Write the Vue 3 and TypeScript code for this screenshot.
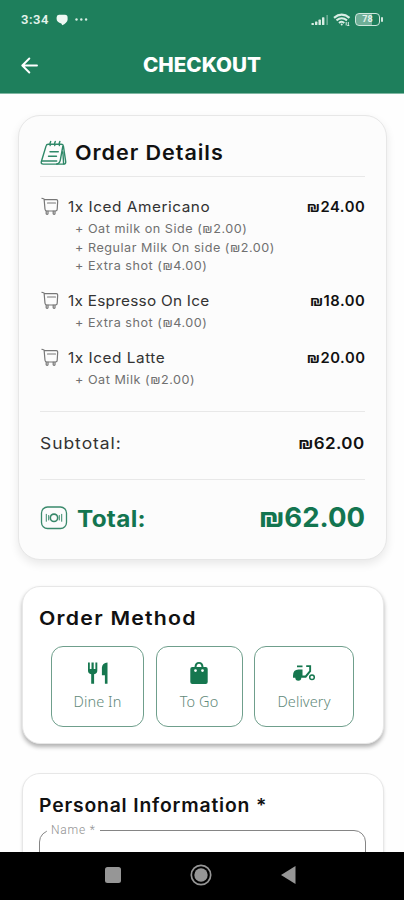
<script setup lang="ts">
interface OrderItem {
  name: string
  price: string
  extras: string[]
}

const items: OrderItem[] = [
  {
    name: '1x Iced Americano',
    price: '₪24.00',
    extras: ['+ Oat milk on Side (₪2.00)', '+ Regular Milk On side (₪2.00)', '+ Extra shot (₪4.00)'],
  },
  { name: '1x Espresso On Ice', price: '₪18.00', extras: ['+ Extra shot (₪4.00)'] },
  { name: '1x Iced Latte', price: '₪20.00', extras: ['+ Oat Milk (₪2.00)'] },
]
</script>

<template>
  <div class="screen">
    <header class="header">
      <div class="status">
        <span class="clock">3:34</span>
        <svg class="chat" width="12" height="12" viewBox="0 0 12 12">
          <path d="M3 .8h6a2.700 2.700 0 0 1 2.600 2.700v2.300C11.600 8 9 10 6.300 11.300L5.300 9.400C2.500 9 .6 7.200.6 5V3.400A2.600 2.600 0 0 1 3 .8z" fill="#eef8f3" />
        </svg>
        <svg class="dots" width="13" height="4" viewBox="0 0 13 4" fill="#d8ede4">
          <circle cx="1.500" cy="1.500" r="1.200" /><circle cx="6.300" cy="1.500" r="1.200" /><circle cx="11.100" cy="1.500" r="1.200" />
        </svg>
        <span class="grow"></span>
        <svg class="signal" width="18" height="12" viewBox="0 0 18 12" fill="#d8ede4">
          <rect x="0.500" y="9" width="2.400" height="2" rx=".6" /><rect x="4" y="7.600" width="2.400" height="3.400" rx=".6" />
          <rect x="7.500" y="5.600" width="2.400" height="5.400" rx=".6" /><rect x="11" y="3.200" width="2.400" height="7.800" rx=".6" />
          <rect x="15.600" y="1" width="1" height="10" opacity=".65" />
        </svg>
        <svg class="wifi" width="18" height="14" viewBox="0 0 18 14" fill="none" stroke="#d8ede4">
          <path d="M1 4.800Q8.700-1.600 16.500 4.800" stroke-width="2.200" />
          <path d="M3.500 7.400Q8.700 3.200 14 7.400" stroke-width="2" />
          <path d="M6 10Q8.700 7.600 11.300 10" stroke-width="2" />
          <circle cx="8.700" cy="11.600" r="1" fill="#d8ede4" stroke="none" />
          <path d="M13.200 9v3.500M15.300 9v4M14.300 12.500h2" stroke-width="1" />
        </svg>
        <span class="battery">78</span>
      </div>
      <div class="bar">
        <svg class="back" width="18" height="17" viewBox="0 0 18 17" fill="none" stroke="#fff" stroke-width="1.900" stroke-linecap="round" stroke-linejoin="round">
          <path d="M16 8.500H1.500M8.300 1.500L1.300 8.500l7 7" />
        </svg>
        <h1>CHECKOUT</h1>
      </div>
    </header>

    <main class="content">
      <section class="card details">
        <div class="title-row">
          <svg width="28" height="26" viewBox="0 0 28 26" fill="none" stroke="#2f8868" stroke-width="1.400" stroke-linecap="round" stroke-linejoin="round">
            <path d="M8.300 4.300h12.900q1.900 0 2.200 1.700l2.300 15.600q.3 2.500-2.200 2.500H3.200q-2.400 0-1.900-2.300L6.100 5.900q.4-1.600 2.200-1.600z" />
            <path d="M22.800 6.500l-2.500 13.700q-.7 3.600-3.600 3.800M22.900 12l.7 11.800M1.900 21h14.800" />
            <path d="M10.700 1.500q-1.100 1.500-.5 4M15.300 1.500q-1.100 1.500-.5 4M19.900 1.500q-1.100 1.500-.5 4M10 11.700h8.300M8.500 16.300h8" />
          </svg>
          <h2>Order Details</h2>
        </div>

        <ul class="items">
          <li v-for="item in items" :key="item.name">
            <div class="line">
              <svg width="18" height="19" viewBox="0 0 18 19" fill="none" stroke="#777" stroke-width="1.200" stroke-linecap="round" stroke-linejoin="round">
                <path d="M.9 1.300l2.200.7.900 10.300q.2 1.700 1.800 1.700h8.700q1.700 0 1.700-1.700l.5-8.300q0-1.400-1.400-1.400H3.200M6.500 6h8" />
                <path d="M5.200 14v2.800q.9 1 1.800 0V14M12.200 14v2.800q.9 1 1.800 0V14" />
              </svg>
              <span class="name">{{ item.name }}</span>
              <span class="price">{{ item.price }}</span>
            </div>
            <p v-for="extra in item.extras" :key="extra" class="extra">{{ extra }}</p>
          </li>
        </ul>

        <div class="subtotal">
          <span class="sub-label">Subtotal:</span>
          <span class="sub-value">₪62.00</span>
        </div>

        <div class="total">
          <svg width="28" height="24" viewBox="0 0 28 24" fill="none" stroke="#39896b" stroke-width="1.300" stroke-linecap="round">
            <rect x="1.500" y="1" width="25" height="21.500" rx="6" />
            <circle cx="14" cy="11.800" r="3.700" stroke-width="1.600" />
            <path d="M6.300 8.300v7M8.700 9.500v4.500M21.700 8.300v7M19.300 9.500v4.500" stroke-width="1" />
          </svg>
          <span class="total-label">Total:</span>
          <span class="total-value">₪62.00</span>
        </div>
      </section>

      <section class="card method">
        <h3>Order Method</h3>
        <div class="options">
          <button class="option dine" type="button">
            <svg width="24" height="24" viewBox="0 0 24 24" fill="#16774f">
              <path d="M2 1.500h1.800v6.500h1.700V1.500h2.200v6.500h1.700V1.500h1.900v8q0 3.200-3.200 3.700v9.500H5.200v-9.500Q2 12.700 2 9.500z" />
              <path d="M21.500 1.500v21.200h-2.600v-8.500h-3V6.500Q16.300 2 21.500 1.500z" />
            </svg>
            <span>Dine In</span>
          </button>
          <button class="option togo" type="button">
            <svg width="24" height="24" viewBox="0 0 24 24" fill="#16774f">
              <path fill-rule="evenodd" d="M7.500 6q.3-5 4.500-5t4.500 5h2.200q2 0 2 2v13q0 2-2 2H5.300q-2 0-2-2V8q0-2 2-2zm2 0h5q-.4-3.200-2.500-3.200T9.500 6zM8.500 8.200a1.400 1.400 0 1 0 0 2.800 1.400 1.400 0 0 0 0-2.800zm7 0a1.400 1.400 0 1 0 0 2.800 1.400 1.400 0 0 0 0-2.800z" />
            </svg>
            <span>To Go</span>
          </button>
          <button class="option delivery" type="button">
            <svg width="24" height="24" viewBox="0 0 24 24" fill="#16774f">
              <path d="M5 4.500h5.500v1.800H5zM1 14.800Q1 8.500 6.500 8.500h4v6h2.700l4-4.800V6h-3V4.200h4.900v6.300l-5 6.200H9.300a3 3 0 0 1-6 0H1z" />
              <circle cx="20" cy="16.300" r="2.300" fill="none" stroke="#16774f" stroke-width="1.500" />
            </svg>
            <span>Delivery</span>
          </button>
        </div>
      </section>

      <section class="card personal">
        <h3>Personal Information *</h3>
        <fieldset class="field">
          <legend>Name *</legend>
        </fieldset>
      </section>
    </main>

    <nav class="navbar">
      <svg width="16" height="16" viewBox="0 0 16 16"><rect width="16" height="16" rx="2.500" fill="#969696" /></svg>
      <svg width="22" height="22" viewBox="0 0 22 22">
        <circle cx="11" cy="11" r="9.700" fill="none" stroke="#969696" stroke-width="1.700" /><circle cx="11" cy="11" r="6.700" fill="#969696" />
      </svg>
      <svg width="15" height="18" viewBox="0 0 15 18"><path d="M14.500 0v18L0 9z" fill="#969696" /></svg>
    </nav>
  </div>
</template>

<style>
body {
  background: #fff;
}
</style>

<style scoped>
.screen {
  display: flex;
  flex-direction: column;
  width: 404px;
  height: 900px;
  overflow: hidden;
  background: #fefefe;
  color: #111;
  font-family: Inter, 'Liberation Sans', sans-serif;
}
.screen * {
  box-sizing: border-box;
}
h1,
h2,
h3,
p,
ul {
  margin: 0;
  padding: 0;
}
svg {
  display: block;
  flex: none;
}
.header {
  flex: none;
  height: 94px;
  background: #1e7f5c;
  border-bottom: 1px solid #7fb7a2;
}
.status {
  display: flex;
  align-items: center;
  height: 39px;
  padding: 0 22px 0 21px;
}
.clock {
  width: 28px;
  color: #e4f3ec;
  font: 600 13px/16px Roboto, sans-serif;
  letter-spacing: 0.5px;
  white-space: nowrap;
}
.chat {
  margin-left: 7px;
}
.dots {
  margin-left: 7px;
}
.grow {
  flex: 1;
}
.wifi {
  margin-left: 4px;
}
.battery {
  position: relative;
  width: 25px;
  height: 13px;
  margin: 0 2px 0 4px;
  border: 1.5px solid #cfe7dd;
  border-radius: 4px;
  color: #e4f3ec;
  background: linear-gradient(90deg, #6fae97 70%, #1e7f5c 70%);
  font: 700 9px/10px Roboto, sans-serif;
  text-align: center;
}
.battery::after {
  content: '';
  position: absolute;
  top: 3px;
  right: -4px;
  width: 2px;
  height: 5px;
  border-radius: 1px;
  background: #cfe7dd;
}
.bar {
  display: grid;
  grid-template-columns: 60px 1fr 60px;
  align-items: center;
  height: 52px;
}
.back {
  margin-left: 21px;
}
h1 {
  color: #fff;
  font-size: 19.5px;
  font-weight: 800;
  line-height: 24px;
  text-align: center;
  transform: scaleX(1.06);
}
.content {
  flex: 1;
  min-height: 0;
  overflow: hidden;
  padding: 21px 21px 0 18px;
}
.card {
  background: #fff;
  border: 1px solid #e7e7e7;
}
.details {
  width: 369px;
  height: 445px;
  padding: 16px 21px 0;
  border-radius: 22px;
  background: #fcfcfc;
  box-shadow: 0 4px 10px rgba(0, 0, 0, 0.09);
}
.title-row {
  display: flex;
  align-items: center;
  height: 45px;
  padding-bottom: 3px;
  border-bottom: 1px solid #e8e8e8;
}
h2 {
  margin-left: 7px;
  font-size: 20.5px;
  font-weight: 600;
  letter-spacing: 0.9px;
  white-space: nowrap;
  transform: scaleX(1.052);
  transform-origin: left;
}
.items {
  height: 234px;
  padding-top: 17px;
  list-style: none;
}
.items li {
  padding-bottom: 12px;
}
.line {
  display: flex;
  align-items: center;
  height: 25px;
  padding-left: 1px;
}
.name {
  margin-left: 9px;
  color: #333;
  font-size: 14.5px;
  letter-spacing: 0.5px;
  white-space: nowrap;
  transform: scaleX(1.06);
  transform-origin: left;
}
.items li:nth-child(2) .name {
  letter-spacing: 0.23px;
}
.price {
  margin-left: auto;
  margin-right: -0.5px;
  font-size: 14.5px;
  font-weight: 600;
  letter-spacing: 0.5px;
  transform: scaleX(1.02);
  transform-origin: right;
}
.extra {
  height: 18.7px;
  padding-left: 35px;
  color: #707070;
  font-size: 11.9px;
  line-height: 20px;
  letter-spacing: 0.5px;
  white-space: nowrap;
  transform: scaleX(1.06);
  transform-origin: 35px 50%;
}
.extra:last-child {
  height: 20px;
}
.subtotal {
  display: flex;
  align-items: center;
  justify-content: space-between;
  height: 69px;
  padding-bottom: 6px;
  border: solid #e8e8e8;
  border-width: 1px 0;
}
.sub-label {
  color: #333;
  font-size: 16px;
  letter-spacing: 0.9px;
  transform: scaleX(1.09);
  transform-origin: left;
}
.sub-value {
  font-size: 16px;
  font-weight: 600;
  letter-spacing: 0.4px;
  transform: scaleX(1.06);
  transform-origin: right;
}
.total {
  display: flex;
  align-items: center;
  height: 76px;
  color: #137550;
  font-weight: 700;
}
.total-label {
  margin-left: 9px;
  font-size: 22.5px;
  letter-spacing: 0.3px;
  transform: translateY(-0.5px) scaleX(1.08);
  transform-origin: left;
}
.total-value {
  margin-left: auto;
  padding-bottom: 2px;
  font-size: 27.5px;
}
.method {
  width: 362px;
  height: 158px;
  margin: 26px 0 0 4px;
  padding: 20px 16px 0;
  border-radius: 18px;
  box-shadow: 0 3px 4px rgba(0, 0, 0, 0.3);
}
h3 {
  font-size: 18.5px;
  font-weight: 600;
  line-height: 24px;
  letter-spacing: 0.8px;
  white-space: nowrap;
  transform: scaleX(1.045);
  transform-origin: left;
}
.method h3 {
  font-size: 19px;
  letter-spacing: 1.1px;
  transform: scaleX(1.12);
}
.options {
  display: grid;
  grid-template-columns: 93px 87px 100px;
  gap: 11.5px;
  padding: 15px 0 0 12px;
}
.option {
  display: flex;
  flex-direction: column;
  align-items: center;
  height: 81px;
  padding: 14px 0 0;
  border: 1px solid #6f9f8c;
  border-radius: 12px;
  background: #fff;
  color: #62897a;
  font: 300 14.5px/20px 'Noto Sans', sans-serif;
  letter-spacing: 0.1px;
  white-space: nowrap;
}
.option span {
  margin-top: 6px;
}
.personal {
  width: 362px;
  height: 180px;
  margin: 29px 0 0 4px;
  padding: 19px 16px 0;
  border-radius: 18px;
  box-shadow: 0 2px 3px rgba(0, 0, 0, 0.12);
}
.field {
  width: 327px;
  height: 60px;
  margin: 6px 0 0;
  padding: 0;
  border: 1px solid #858585;
  border-radius: 12px;
}
legend {
  margin-left: 7px;
  padding: 0 4px;
  color: #919191;
  font: 300 12px/14px Roboto, sans-serif;
  letter-spacing: 0.8px;
}
.navbar {
  display: grid;
  grid-template-columns: 88px 88px 88px;
  flex: none;
  justify-content: center;
  justify-items: center;
  align-items: center;
  height: 48px;
  padding: 0 3px 3px 0;
  background: #000;
}
</style>
